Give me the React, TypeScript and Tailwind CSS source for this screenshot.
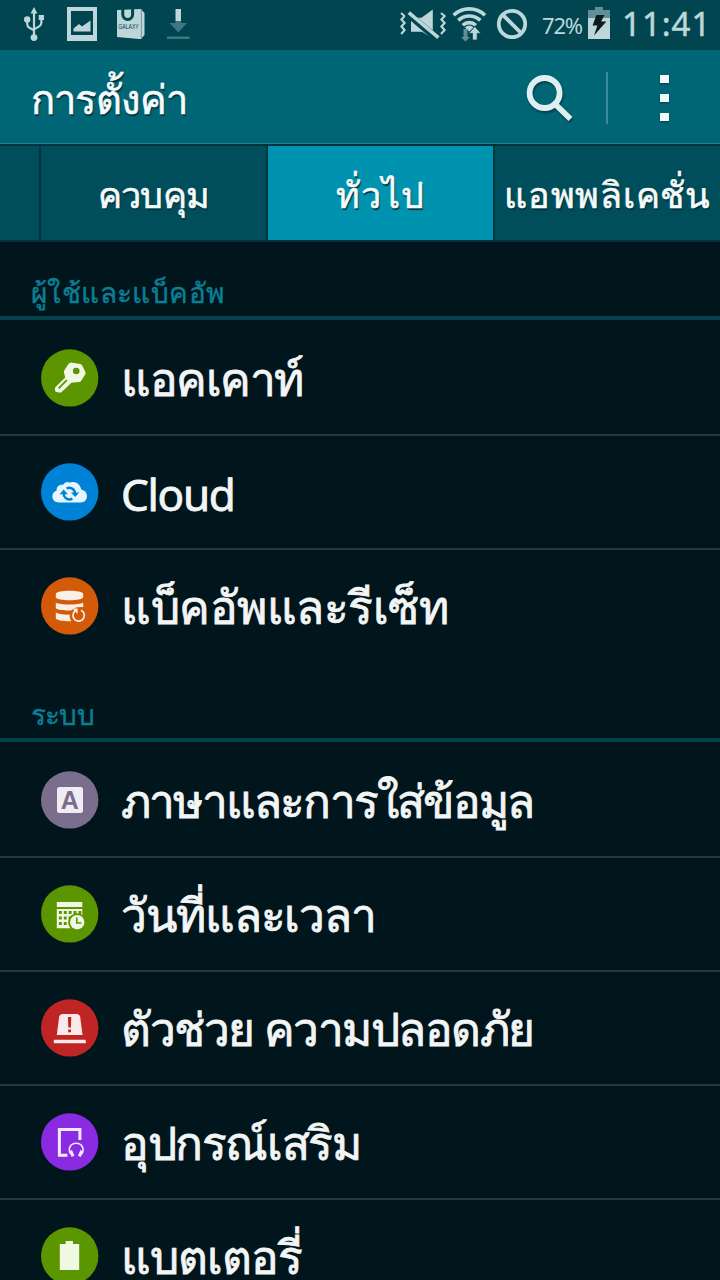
import type { ReactNode } from "react";

type Item = { label: string; text: string; icon: ReactNode };

function Disc({ color, children }: { color: string; children: ReactNode }) {
  return (
    <svg width="58" height="58" viewBox="0 0 58 58" className="shrink-0">
      <circle cx="28.7" cy="28.9" r="28.7" fill={color} />
      {children}
    </svg>
  );
}

const keyIcon = (
  <Disc color="#5b9500">
    <path
      d="M27.4 14.9Q28.4 13.4 30.2 13.4L39.2 14.9Q40.6 15.2 41.2 16.6L44.4 23Q45 24.3 44.2 25.6L40.2 31.8Q39.4 33 38 33.1L30.4 33.8L20.4 43.2Q19.6 43.9 18.2 43.6L15.4 43Q14.1 42.6 14 41.4V39.4Q14 38.6 14.8 37.8L24.2 28.4L23 23.4Q22.8 22.2 23.4 21.2Z"
      fill="#f0f7e3"
    />
    <circle cx="35.2" cy="22" r="3.3" fill="#5b9500" />
    <path d="M17.6 39.4L25.8 31.2" stroke="#5b9500" strokeWidth="1.8" />
  </Disc>
);

const cloudIcon = (
  <Disc color="#0083d6">
    <path
      d="M18 39.4C13.8 39.4 11.4 36.8 11.4 33.5C11.4 30.4 13 28.4 15.6 27.7C15.3 23.6 18.2 21.2 22.2 21.8C23.8 19.4 26 18.4 28.6 19.6C33 17.6 38.8 19.8 40.3 26.4C43.8 27.2 46 29.7 46 33C46 36.8 43.6 39.4 39.8 39.4Z"
      fill="#e6f4fd"
    />
    <g fill="none" stroke="#0083d6" strokeWidth="2.4">
      <path d="M25.6 25.5A5.7 5.7 0 0 1 34 30.4" />
      <path d="M31.4 35.6A5.7 5.7 0 0 1 22.8 30" />
    </g>
    <path d="M30 29.4H38.2L34.2 34ZM18.6 31.2L22.6 26.6L26.8 31.2Z" fill="#0083d6" />
  </Disc>
);

const backupIcon = (
  <Disc color="#d35a08">
    <g fill="#fbf0e7">
      <path d="M14.8 17C14.8 12.6 42.2 12.6 42.2 17V20C42.2 24.4 14.8 24.4 14.8 20Z" />
      <path d="M14.8 25.8C20 28.2 37 28.2 42.2 25.8V30.2C38 29.4 33 30.4 30 33.4C24 33.6 17 33 14.8 31.2Z" />
      <path d="M14.8 35.5C18 37.2 24 37.8 28.6 37.6C28.4 40 29 42.4 30.4 44.2C24 44.4 17.4 43.8 14.8 41.8Z" />
      <path d="M31.2 31.6H36.6V37Z" />
    </g>
    <path d="M40 33.2A5.7 5.7 0 1 1 34 34" fill="none" stroke="#fbf0e7" strokeWidth="1.7" />
  </Disc>
);

const languageIcon = (
  <Disc color="#7b6d8d">
    <rect x="16" y="16" width="26" height="26" rx="2.5" fill="#efedf1" />
    <text x="28.9" y="37.8" textAnchor="middle" className="font-['Liberation_Sans'] text-[25px] font-bold" fill="#7b6d8d">
      A
    </text>
  </Disc>
);

const dateIcon = (
  <Disc color="#5b9500">
    <path d="M15.8 17H41.3V22H15.8ZM15.8 24H41.3V43.2H15.8Z" fill="#f0f7e3" />
    <g fill="#5b9500">
      {[0, 1, 2, 3, 4].map((c) =>
        [0, 1, 2].map((r) => <rect key={`${c}-${r}`} x={17.9 + c * 4.9} y={26 + r * 5.5} width="2.9" height="3" />)
      )}
    </g>
    <circle cx="36.2" cy="37.2" r="9" fill="#5b9500" />
    <circle cx="36.2" cy="37.2" r="7.2" fill="#f0f7e3" />
    <path d="M35.8 32.6V38H40.4" fill="none" stroke="#5b9500" strokeWidth="1.7" />
  </Disc>
);

const safetyIcon = (
  <Disc color="#c02525">
    <path d="M18.2 17.6Q18.8 15 21.4 15H36Q38.6 15 39.1 17.6L41.6 36H15.8Z" fill="#fbe9e9" />
    <path d="M12.8 41.2Q12.8 40.8 13.4 40.8H44.4L45 43.2Q45 44.3 44.2 44.3H13.6Q12.7 44.3 12.7 43.4Z" fill="#fbe9e9" />
    <path d="M26.9 18H30.3L29.9 28.4H27.3ZM27.2 30.5H30V33.2H27.2Z" fill="#c02525" />
  </Disc>
);

const accessoryIcon = (
  <Disc color="#8a2be2">
    <path d="M38.9 27V16.5H18.4V42.2H26.4" fill="none" stroke="#f3e9fd" strokeWidth="3" />
    <path d="M29.6 41.2C26.4 35.2 29.8 30.3 35.2 30.3C40.6 30.3 44 35.2 40.8 41.2" fill="none" stroke="#f3e9fd" strokeWidth="1.6" />
    <path d="M29.6 37.6L32 43.4M40.8 37.6L38.4 43.4" stroke="#f3e9fd" strokeWidth="3" />
  </Disc>
);

const batteryIcon = (
  <Disc color="#5b9500">
    <path d="M18.8 17H24.7V14H32V17H38.2V43H18.8Z" fill="#f0f7e3" />
  </Disc>
);

const sections: { title: string; text: string; items: Item[] }[] = [
  {
    title: "ผู้ใช้และแบ็คอัพ",
    text: "tracking-[0.4px]",
    items: [
      { label: "แอคเคาท์", text: "text-[46px] tracking-[-1.5px]", icon: keyIcon },
      { label: "Cloud", text: "text-[44px] tracking-[-1.3px] pt-[4px]", icon: cloudIcon },
      { label: "แบ็คอัพและรีเซ็ท", text: "text-[46px] tracking-[-0.5px]", icon: backupIcon },
    ],
  },
  {
    title: "ระบบ",
    text: "tracking-[-0.8px]",
    items: [
      { label: "ภาษาและการใส่ข้อมูล", text: "text-[46px] tracking-[-1.8px]", icon: languageIcon },
      { label: "วันที่และเวลา", text: "text-[46px] tracking-[-1.1px]", icon: dateIcon },
      { label: "ตัวช่วย ความปลอดภัย", text: "text-[46px] tracking-[-1.5px]", icon: safetyIcon },
      { label: "อุปกรณ์เสริม", text: "text-[46px] tracking-[-1.4px]", icon: accessoryIcon },
      { label: "แบตเตอรี่", text: "text-[46px] tracking-[-1px]", icon: batteryIcon },
    ],
  },
];

function StatusBar() {
  return (
    <div className="flex h-[50px] shrink-0 items-start bg-[#00454f] text-[#bcd6da]">
      <svg width="20" height="36" viewBox="0 0 20 36" className="mt-[6px] ml-6" fill="currentColor">
        <path d="M10 1L13.4 7.4H6.6Z" />
        <path d="M10 6V32M3.2 13V18Q3.2 20.6 5.4 21.8L10 24.4M17.4 12V16.5Q17.4 19.2 15.2 20.4L10 23.4" fill="none" stroke="currentColor" strokeWidth="2.2" />
        <circle cx="10" cy="31.6" r="3.4" />
        <circle cx="3.2" cy="13.4" r="3.2" />
        <path d="M14.7 9H20V14H14.7Z" />
      </svg>
      <svg width="30" height="34" viewBox="0 0 30 34" className="mt-[7px] ml-[23px]">
        <path d="M0 0H30V34H0ZM4 4V28H26V4Z" fill="currentColor" fillRule="evenodd" />
        <path d="M6.5 24.5V21.5L12 17L15 19.5L23.5 13.5V24.5Z" fill="currentColor" />
      </svg>
      <svg width="28" height="32" viewBox="0 0 28 32" className="mt-[8px] ml-[20px]">
        <path d="M0 2L24 1L27.5 5V27L24 31H22L0 29Z" fill="currentColor" />
        <path d="M24.4 2V30.5" stroke="#6f979e" strokeWidth="1" />
        <path d="M5.8 1V6.5A4.8 4.8 0 0 0 15.6 6.5V1" fill="none" stroke="#00454f" strokeWidth="3" />
        <text x="1.2" y="20.6" textLength="20.6" lengthAdjust="spacingAndGlyphs" className="font-['Liberation_Sans'] text-[7.5px]" fill="#00454f">
          GALAXY
        </text>
      </svg>
      <svg width="23" height="32" viewBox="0 0 23 32" className="mt-[8px] ml-[22px]">
        <path d="M8.5 1H14V13H8.5Z" fill="currentColor" />
        <path d="M8.5 13H14V15H20L11.3 24.5L2.5 15H8.5ZM0 28.5H22.5V31H0Z" fill="#3f7780" />
      </svg>

      <div className="ml-auto flex items-start">
        <svg width="47" height="32" viewBox="0 0 47 32" className="mt-[8px]">
          <g fill="none" stroke="currentColor" strokeWidth="2.1">
            <path d="M1 5L4.6 8L1.4 11.5L4.6 15L1.4 18.5L4.6 22L1.2 26" />
            <path d="M41 5L44.6 8L41.4 11.5L44.6 15L41.4 18.5L44.6 22L41 26" />
          </g>
          <path d="M11 9.8H21.5L32.8 1.6V30.2L21.5 23.4H11Z" fill="currentColor" />
          <path d="M7 5.4L39 32" stroke="#00454f" strokeWidth="7" />
          <path d="M8.8 4.6L38.4 29.6" stroke="currentColor" strokeWidth="3.6" />
          <path d="M11 13V23.4H22.4Z" fill="currentColor" />
        </svg>
        <svg width="35" height="36" viewBox="0 0 35 36" className="mt-[6px] ml-[5px]">
          <g fill="none" stroke="currentColor" strokeWidth="3.6">
            <path d="M1.6 9.2A22.6 22.6 0 0 1 33 9.2" />
            <path d="M6.3 14.4A15.8 15.8 0 0 1 28.3 14.4" />
            <path d="M10.8 19.2A9.4 9.4 0 0 1 23.8 19.2" />
          </g>
          <path d="M12.8 21.4Q17.4 17.6 21.6 21.4L17.4 25.6Z" fill="currentColor" />
          <path d="M11.5 23H15.5V31H18L13.5 35.5L9 31H11.5Z" fill="#5f8f97" />
          <path d="M20.4 34V27.4H16.6L22.8 20.4L29 27.4H25.2V34Z" fill="currentColor" stroke="#00454f" strokeWidth=".8" />
        </svg>
        <svg width="32" height="32" viewBox="0 0 32 32" className="mt-[8px] ml-[9px]" fill="none" stroke="currentColor" strokeWidth="3.8">
          <circle cx="16" cy="16" r="13.2" />
          <path d="M6.8 6.8L25.2 25.2" />
        </svg>
        <span className="mt-[9px] ml-[14px] w-[42px] text-[22px] leading-8 tracking-[-1.2px] whitespace-nowrap">72%</span>
        <svg width="22" height="32" viewBox="0 0 22 32" className="mt-[7px] ml-[4px]">
          <path d="M7 0H15V3H22V11H0V3H7Z" fill="#5f8f97" />
          <path d="M0 11H22V32H0Z" fill="currentColor" />
          <path d="M8.4 8H16.4L13.2 14.4H18.4L6 28.6L9.4 18.4H4.6Z" fill="#0a1c20" />
        </svg>
        <span className="mt-[4px] ml-[12px] w-[98px] text-[33px] leading-10 tracking-[1px] whitespace-nowrap [-webkit-text-stroke:0.5px_currentColor]">
          11:41
        </span>
      </div>
    </div>
  );
}

function ActionBar() {
  return (
    <div className="flex h-[94px] shrink-0 items-center border-b border-[#2b7f8b] bg-[#006676]">
      <h1 className="mt-[4px] ml-[31px] text-[40px] leading-[60px] tracking-[-0.8px] whitespace-nowrap text-[#f5fafa] [text-shadow:1px_2px_1px_#00303a] [-webkit-text-stroke:0.6px_currentColor]">
        การตั้งค่า
      </h1>
      <svg width="50" height="50" viewBox="0 0 50 50" className="mt-[6px] ml-auto drop-shadow-[1px_2px_1px_#00404a]" fill="none" stroke="#dfeef0">
        <circle cx="19.6" cy="18" r="15" strokeWidth="5.8" />
        <path d="M29.5 28.5L45.5 44" strokeWidth="5.8" />
      </svg>
      <div className="mt-[2px] ml-[31px] h-[52px] w-[2px] bg-[#3d8b98]" />
      <div className="mt-[2px] mr-[51px] ml-[52px] flex flex-col gap-[11px] drop-shadow-[0_1px_1px_#00404a]">
        <div className="h-[8px] w-[9px] bg-[#f2f8f8]" />
        <div className="h-[8px] w-[9px] bg-[#f2f8f8]" />
        <div className="h-[8px] w-[9px] bg-[#f2f8f8]" />
      </div>
    </div>
  );
}

function Tabs() {
  return (
    <div className="flex h-[98px] shrink-0 gap-[2px] border-y-2 border-[#00333d] bg-[#003640] text-[36px] whitespace-nowrap text-[#f5fafa] [text-shadow:1px_2px_1px_#00303a] [-webkit-text-stroke:0.6px_currentColor]">
      <div className="w-[39px] bg-[#004e5b]" />
      <div className="flex w-[225px] items-center justify-center bg-[#004e5b] pt-[3px]">
        <span className="tracking-[-0.8px]">ควบคุม</span>
      </div>
      <div className="flex w-[225px] items-center justify-center bg-[#0093b0] pt-[3px]">
        <span className="tracking-[1px]">ทั่วไป</span>
      </div>
      <div className="flex w-[225px] items-center justify-center bg-[#004e5b] pt-[3px]">
        <span className="tracking-[0.7px]">แอพพลิเคชั่น</span>
      </div>
    </div>
  );
}

export default function App() {
  return (
    <div className="flex h-[1280px] w-[720px] flex-col overflow-hidden bg-[#00151c] font-['Noto_Sans',sans-serif]">
      <StatusBar />
      <ActionBar />
      <Tabs />
      {sections.map((section) => (
        <section key={section.title} className="shrink-0">
          <div className="flex h-[78px] items-end border-b-4 border-[#05424e] pl-[31px] text-[#0b7f94]">
            <h2 className={`mb-[4px] text-[28px] leading-[40px] whitespace-nowrap [-webkit-text-stroke:0.4px_currentColor] ${section.text}`}>
              {section.title}
            </h2>
          </div>
          <ul className="pt-[2px]">
            {section.items.map((item) => (
              <li
                key={item.label}
                className="flex h-[114px] items-center border-b-2 border-[#26363d] pl-[41px] last:border-transparent"
              >
                {item.icon}
                <span
                  className={`ml-[22px] leading-[60px] whitespace-nowrap text-[#f3f5f5] [-webkit-text-stroke:0.8px_currentColor] ${item.text}`}
                >
                  {item.label}
                </span>
              </li>
            ))}
          </ul>
        </section>
      ))}
    </div>
  );
}
